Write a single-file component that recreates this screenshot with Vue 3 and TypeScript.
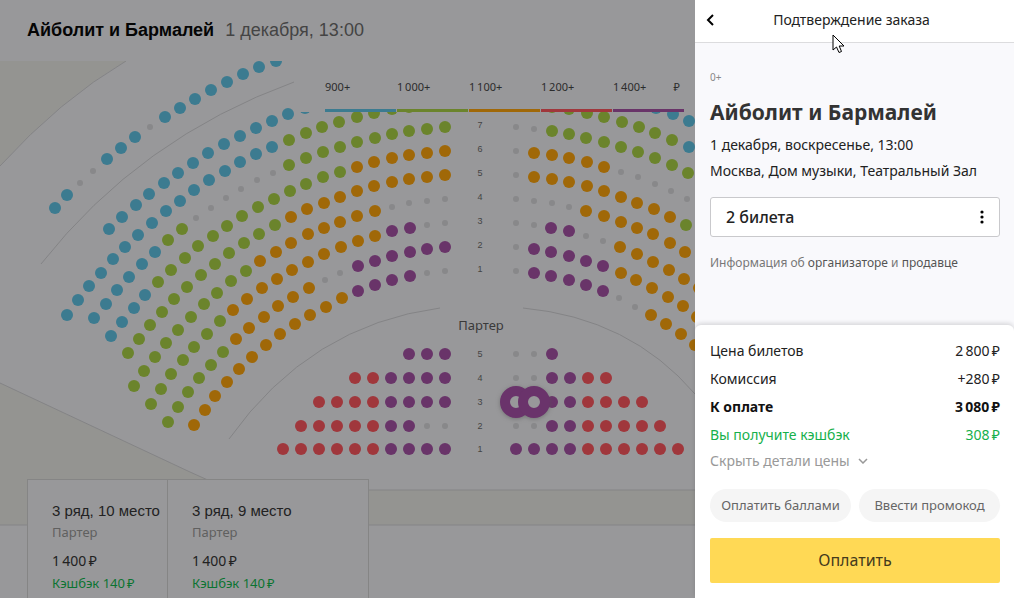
<script setup lang="ts">
type Tone = 'b' | 'g' | 'o' | 'p' | 'r' | 'n'
interface Seat { x: number; y: number; tone: Tone }

// Each balcony row runs from the centre aisle outwards; the right wing mirrors the left one.
interface Row { points: number[][]; left: string; right: string }

const rows: Row[] = [
  {
    points: [[276, 61], [259, 67], [243, 74], [227, 82], [211, 90], [195, 99], [180, 108], [165, 117], [150, 127], [135, 137], [121, 148], [107, 159], [93, 171], [80, 183], [67, 195], [55, 208]],
    left: 'bbbbbbbbnbbbnnbb', right: '',
  },
  {
    points: [[305, 108], [288, 114], [272, 121], [256, 128], [240, 136], [224, 144], [208, 153], [193, 163], [178, 173], [164, 183], [149, 194], [136, 205], [122, 217], [109, 229]],
    left: 'bbbbbbbbbbbbbb', right: 'bbb',
  },
  {
    points: [[409, 107], [392, 109], [374, 113], [357, 117], [339, 122], [322, 127], [306, 133], [289, 140], [272, 147], [256, 154], [240, 162], [225, 171], [209, 180], [194, 190], [180, 201], [166, 211], [152, 223], [138, 235], [125, 247], [113, 259], [101, 273], [89, 286], [78, 300], [67, 315]],
    left: 'ggggggggbbbbbbbbbbbbbbbb', right: 'ggggggggb',
  },
  {
    points: [[445, 127], [427, 129], [409, 131], [392, 134], [375, 138], [357, 142], [340, 147], [323, 152], [306, 158], [289, 165], [273, 173], [257, 180], [241, 189], [226, 198], [211, 208], [196, 218], [182, 229], [168, 240], [155, 252], [142, 264], [129, 277], [117, 290], [106, 304], [94, 318]],
    left: 'ggggggggggnnnnnnggbbbbbb', right: 'nnggggggggg',
  },
  {
    points: [[445, 151], [427, 153], [409, 155], [392, 158], [374, 162], [357, 167], [340, 172], [323, 177], [306, 184], [290, 191], [274, 199], [258, 207], [242, 216], [227, 226], [213, 236], [198, 246], [185, 258], [171, 270], [158, 282], [145, 295], [134, 308], [122, 322], [111, 336]],
    left: 'oooooogggggggggggggbbbb', right: 'nooooonnnnn',
  },
  {
    points: [[445, 175], [427, 177], [409, 179], [392, 182], [374, 186], [357, 191], [340, 197], [324, 203], [307, 209], [291, 217], [275, 225], [259, 234], [244, 243], [229, 253], [215, 264], [201, 275], [187, 287], [174, 299], [162, 312], [150, 325], [139, 339], [128, 353]],
    left: 'oooooooooogggggggggggg', right: 'nooooooooog',
  },
  {
    points: [[445, 199], [427, 201], [409, 203], [392, 207], [375, 211], [357, 216], [340, 222], [324, 228], [308, 234], [291, 243], [276, 252], [260, 261], [246, 271], [231, 281], [217, 293], [204, 304], [191, 317], [178, 330], [166, 343], [155, 357], [144, 371], [134, 386]],
    left: 'nnnnoooooooogggggggggg', right: 'nnnnooooooo',
  },
  {
    points: [[445, 223], [427, 225], [410, 228], [392, 231], [375, 236], [358, 241], [341, 247], [324, 254], [308, 262], [292, 270], [277, 279], [262, 288], [247, 299], [233, 310], [220, 321], [207, 334], [194, 347], [183, 360], [171, 374], [161, 389], [151, 404]],
    left: 'nnppooooooooooggggggg', right: 'nnppnnoooooo',
  },
  {
    points: [[445, 247], [427, 249], [410, 252], [392, 256], [375, 261], [358, 266], [340, 273], [325, 280], [309, 288], [293, 297], [278, 306], [264, 317], [249, 328], [236, 339], [223, 352], [211, 365], [199, 378], [188, 392], [178, 407], [168, 422]],
    left: 'ppppppnnoooooogggggg', right: 'npppppoooooo',
  },
  {
    points: [[445, 271], [427, 273], [410, 276], [392, 280], [375, 285], [358, 291], [342, 298], [326, 307], [310, 315], [295, 324], [280, 334], [266, 345], [252, 357], [239, 369], [227, 382], [215, 396], [205, 410], [194, 425]],
    left: 'nnppppoooooooooooo', right: 'npppppnnoooo',
  },
]

const stalls = [
  { y: 354, left: 'ppp', right: 'nnp' },
  { y: 378, left: 'pppprr', right: 'nnpprr' },
  { y: 402, left: 'pppprrrr', right: 'nnpprrrr' },
  { y: 426, left: 'nnpprrrrr', right: 'nnpprrrrr' },
  { y: 449, left: 'pppprrrrrr', right: 'pppprrrrrr' },
]

const AXIS = 961
const seats: Seat[] = []
for (const row of rows) {
  ;[...row.left].forEach((t, i) => seats.push({ x: row.points[i][0], y: row.points[i][1], tone: t as Tone }))
  ;[...row.right].forEach((t, i) => seats.push({ x: AXIS - row.points[i][0], y: row.points[i][1], tone: t as Tone }))
}
for (const s of stalls) {
  ;[...s.left].forEach((t, i) => seats.push({ x: 445 - i * 18, y: s.y, tone: t as Tone }))
  ;[...s.right].forEach((t, i) => seats.push({ x: 516 + i * 18, y: s.y, tone: t as Tone }))
}

const rowLabels = [
  ...[7, 6, 5, 4, 3, 2, 1].map((n, i) => ({ n, y: 125 + i * 24 })),
  ...stalls.map((s, i) => ({ n: 5 - i, y: s.y })),
]

const prices = [
  { label: '900+', tone: 'b' },
  { label: '1\u2009000+', tone: 'g' },
  { label: '1\u2009100+', tone: 'o' },
  { label: '1\u2009200+', tone: 'r' },
  { label: '1\u2009400+', tone: 'p' },
]

const tickets = [
  { seat: '3 ряд, 10 место', zone: 'Партер', price: '1\u2009400\u2009₽', cashback: 'Кэшбэк 140\u2009₽' },
  { seat: '3 ряд, 9 место', zone: 'Партер', price: '1\u2009400\u2009₽', cashback: 'Кэшбэк 140\u2009₽' },
]

const totals = [
  { name: 'Цена билетов', value: '2\u2009800\u2009₽', kind: '' },
  { name: 'Комиссия', value: '+280\u2009₽', kind: '' },
  { name: 'К оплате', value: '3\u2009080\u2009₽', kind: 'due' },
  { name: 'Вы получите кэшбэк', value: '308\u2009₽', kind: 'bonus' },
]
</script>

<template>
  <div class="page">
    <main class="hall">
      <header class="hall-head">
        <h1>Айболит и Бармалей</h1>
        <span>1 декабря, 13:00</span>
      </header>

      <svg class="map" width="695" height="537" viewBox="0 61 695 537" role="img" aria-label="Схема зала">
        <path class="outside" d="M0 61H126Q60 100 0 166Z" />
        <path class="outside" d="M0 383L190 472L230 490H695V525H0Z" />
        <path class="edge" d="M126 61Q60 100 0 166M0 383L190 472L230 490H695M0 525H695" />
        <path class="edge" d="M294 82Q140 138 41 264M229 439Q310 325 440 308M523 308Q630 318 695 394" />
        <circle
          v-for="(s, i) in seats" :key="i" :cx="s.x" :cy="s.y"
          :r="s.tone === 'n' ? 3 : 6" :class="'tone-' + s.tone"
        />
        <g class="row-labels">
          <text v-for="(l, i) in rowLabels" :key="i" x="480" :y="l.y + 3">{{ l.n }}</text>
        </g>
        <text class="zone" x="481" y="330">Партер</text>
        <g class="picked">
          <circle cx="516" cy="402" r="11" />
          <circle cx="534" cy="402" r="11" />
        </g>
      </svg>

      <div class="legend">
        <div v-for="p in prices" :key="p.label" :class="['price', 'tone-' + p.tone]">{{ p.label }}</div>
        <span class="currency">₽</span>
      </div>

      <section class="tickets">
        <article v-for="t in tickets" :key="t.seat" class="ticket">
          <h2>{{ t.seat }}</h2>
          <p class="place">{{ t.zone }}</p>
          <p class="cost">{{ t.price }}</p>
          <p class="cashback">{{ t.cashback }}</p>
        </article>
      </section>
    </main>

    <aside class="panel">
      <header class="panel-head">
        <button class="back" type="button" aria-label="Назад">
          <svg width="10" height="14" viewBox="0 0 10 14"><path d="M7 2L2 7L7 12" /></svg>
        </button>
        <h2>Подтверждение заказа</h2>
      </header>

      <section class="order">
        <p class="age">0+</p>
        <h3>Айболит и Бармалей</h3>
        <p class="line">1 декабря, воскресенье, 13:00</p>
        <p class="line">Москва, Дом музыки, Театральный Зал</p>
        <button class="count" type="button">
          <span>2 билета</span>
          <svg width="4" height="14" viewBox="0 0 4 14"><circle cx="2" cy="2" r="1.6" /><circle cx="2" cy="7" r="1.6" /><circle cx="2" cy="12" r="1.6" /></svg>
        </button>
        <p class="info">Информация об <a href="#">организаторе</a> и <a href="#">продавце</a></p>
      </section>

      <section class="summary">
        <dl>
          <div v-for="t in totals" :key="t.name" :class="['total', t.kind]">
            <dt>{{ t.name }}</dt>
            <dd>{{ t.value }}</dd>
          </div>
        </dl>
        <button class="toggle" type="button">
          Скрыть детали цены
          <svg width="10" height="6" viewBox="0 0 10 6"><path d="M1 1L5 5L9 1" /></svg>
        </button>
        <div class="extras">
          <button type="button">Оплатить баллами</button>
          <button type="button">Ввести промокод</button>
        </div>
        <button class="pay" type="button">Оплатить</button>
      </section>
    </aside>

    <svg class="pointer" width="14" height="20" viewBox="0 0 14 20" aria-hidden="true">
      <path d="M1 1V16L4.500 13L7 18.500L9.500 17.500L7.200 12H12Z" />
    </svg>
  </div>
</template>

<style>
body { margin: 0; }
</style>

<style scoped>
.page {
  position: relative;
  display: flex;
  min-height: 100vh;
  overflow: hidden;
  font-family: "Noto Sans", "Open Sans", sans-serif;
  font-size: 14px;
  color: #222;
}
h1, h2, h3, p, dl, dd { margin: 0; }
button { padding: 0; border: 0; background: none; font: inherit; color: inherit; cursor: pointer; }

.hall {
  position: relative;
  flex: 1;
  min-width: 0;
  display: flex;
  flex-direction: column;
  overflow: hidden;
  background: #98989a;
}
.hall-head {
  display: flex;
  align-items: baseline;
  gap: 11px;
  padding: 18px 27px 0;
  font: 18px/24px "Liberation Sans", Arial, sans-serif;
  color: #444;
}
.hall-head h1 { font-size: 18px; line-height: 24px; color: #050505; }
.map { position: absolute; top: 61px; left: 0; }
.outside { fill: #949491; }
.edge { fill: none; stroke: #848486; }
.tone-b { fill: #3c7b90; }
.tone-g { fill: #6b842c; }
.tone-o { fill: #a06808; }
.tone-p { fill: #693469; }
.tone-r { fill: #a0373c; }
.tone-n { fill: #88888a; }
.row-labels { font: 9px "Liberation Sans", Arial, sans-serif; fill: #444; text-anchor: middle; }
.zone { font-size: 13px; fill: #3a3a3a; text-anchor: middle; }
.picked { fill: #98989a; stroke: #6a336b; stroke-width: 10px; filter: drop-shadow(0 1px 2px #5558); }

.legend {
  position: relative;
  display: grid;
  grid-template-columns: repeat(5, 71px);
  column-gap: 1px;
  width: 359px;
  margin: 34px 0 0 295px;
  padding-left: 30px;
  background: #98989a;
  font-size: 11px;
  line-height: 22px;
  color: #2c2c2c;
}
.price { height: 33px; border-bottom: 3px solid; white-space: nowrap; }
.price.tone-b { border-color: #3c7b90; }
.price.tone-g { border-color: #6b842c; }
.price.tone-o { border-color: #a06808; }
.price.tone-r { border-color: #a0373c; }
.price.tone-p { border-color: #693469; }
.currency { position: absolute; right: 4px; top: 0; }

.tickets {
  position: relative;
  display: flex;
  align-self: flex-start;
  width: 342px;
  height: 119px;
  margin: auto 0 0 27px;
  border: 1px solid #858585;
  border-bottom: 0;
  box-sizing: border-box;
  background: #98989a;
}
.ticket { width: 139px; padding: 20px 0 0 24px; box-sizing: border-box; white-space: nowrap; }
.ticket + .ticket { flex: 1; border-left: 1px solid #858585; }
.ticket h2 { font: 15px/21px "Liberation Sans", Arial, sans-serif; color: #222; }
.ticket p { font-size: 13px; line-height: 22px; }
.ticket .place { color: #606060; }
.ticket .cost { margin-top: 6px; font-size: 14px; line-height: 23px; color: #222; }
.ticket .cashback { color: #0b7431; }

.panel {
  position: relative;
  display: flex;
  flex-direction: column;
  width: 319px;
  flex: none;
  background: #f9f9fc;
}
.panel-head {
  display: grid;
  grid-template-columns: 32px 1fr 38px;
  align-items: center;
  height: 40px;
  padding-bottom: 2px;
  border-bottom: 1px solid #dcdcde;
  background: #fff;
}
.panel-head h2 { font-size: 14px; font-weight: 400; line-height: 20px; text-align: center; }
.back { display: grid; place-items: center; height: 40px; }
.back path { fill: none; stroke: #000; stroke-width: 2px; }
.order { padding: 24px 14px 0 15px; }
.age { font-size: 10px; line-height: 20px; color: #888; }
.order h3 { margin: 12px 0 7px; font-size: 21px; line-height: 26px; color: #333; }
.line { font-size: 14px; line-height: 26px; white-space: nowrap; }
.count {
  display: flex;
  align-items: center;
  justify-content: space-between;
  width: 100%;
  height: 40px;
  margin-top: 13px;
  padding: 0 15px;
  border: 1px solid #c9c9cc;
  border-radius: 3px;
  background: #fff;
  font-size: 16px;
  font-weight: 500;
}
.info { margin-top: 16px; font-size: 12px; line-height: 20px; color: #777; }
.info a { color: #555; text-decoration: none; }

.summary {
  margin-top: auto;
  padding: 12px 14px 15px 15px;
  border-radius: 6px 6px 0 0;
  background: #fff;
  box-shadow: 0 -2px 4px #0002;
}
.total { display: flex; justify-content: space-between; line-height: 28px; }
.total.due { font-weight: 700; color: #111; }
.total.bonus { color: #16b04b; }
.toggle { display: flex; align-items: center; gap: 8px; line-height: 24px; color: #999; }
.toggle path { fill: none; stroke: #999; stroke-width: 1.500px; }
.extras { display: grid; grid-template-columns: 1fr 1fr; gap: 8px; margin: 16px 0; }
.extras button { height: 33px; padding-bottom: 2px; border-radius: 17px; background: #f5f5f5; font-size: 13px; color: #666; }
.pay { width: 100%; height: 45px; padding-bottom: 2px; border-radius: 2px; background: #ffd955; font-size: 16px; color: #443a1c; }

.pointer { position: absolute; left: 832px; top: 34px; }
.pointer path { fill: #fff; stroke: #000; }
</style>
